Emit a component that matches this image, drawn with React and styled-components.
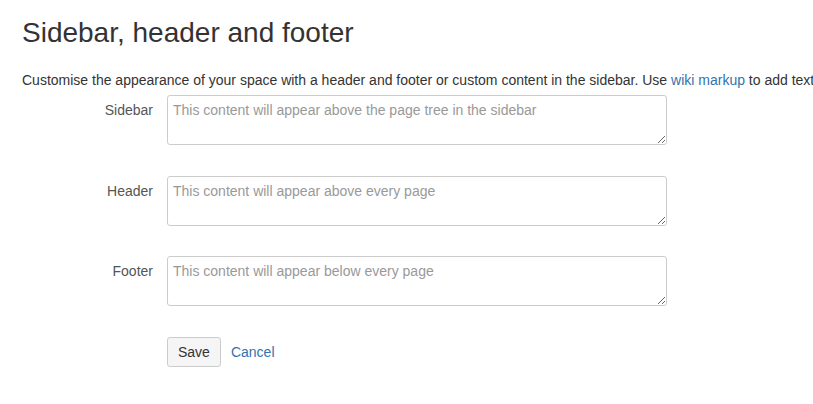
import React from 'react';
import styled, { createGlobalStyle } from 'styled-components';

const GlobalStyle = createGlobalStyle`
  body {
    margin: 0;
    background: #fff;
    font-family: Arial, "Liberation Sans", sans-serif;
    font-size: 14px;
    color: #333;
    overflow: hidden;
  }
`;

const Page = styled.div`
  padding: 18px 0 0 22px;
  font-size: 14px;
`;

const Title = styled.h1`
  font-size: 28px;
  font-weight: normal;
  line-height: 30px;
  margin: 0;
  color: #333;
`;

const Intro = styled.p`
  font-size: 14px;
  line-height: 20px;
  margin: 22px 0 5px 0;
  white-space: nowrap;
`;

const Link = styled.a`
  color: #3572b0;
  text-decoration: none;
  font-size: 14px;
`;

const Form = styled.form`
  display: flex;
  flex-direction: column;
  gap: 30px;
`;

const Row = styled.div`
  display: grid;
  grid-template-columns: 131px 500px;
  column-gap: 14px;
  align-items: start;
  margin-top: ${(p) => (p.$first ? '0' : '1px')};
`;

const Label = styled.label`
  text-align: right;
  font-size: 14px;
  line-height: 20px;
  padding-top: 5px;
  color: #555;
`;

const Field = styled.textarea`
  box-sizing: border-box;
  width: 500px;
  height: 50px;
  margin: 0;
  padding: 4px 5px;
  border: 1px solid #ccc;
  border-radius: 3px;
  font-family: Arial, "Liberation Sans", sans-serif;
  font-size: 14px;
  line-height: 20px;
  color: #333;
  resize: vertical;

  &::placeholder {
    color: #999;
  }
`;

const Actions = styled.div`
  display: flex;
  align-items: center;
  gap: 10px;
  margin-left: 145px;
  margin-top: 1px;
`;

const Button = styled.button`
  box-sizing: border-box;
  height: 30px;
  padding: 0 10px;
  background: #f5f5f5;
  border: 1px solid #ccc;
  border-radius: 3px;
  font-family: Arial, "Liberation Sans", sans-serif;
  font-size: 14px;
  color: #333;
`;

const fields = [
  { id: 'sidebar', label: 'Sidebar', placeholder: 'This content will appear above the page tree in the sidebar' },
  { id: 'header', label: 'Header', placeholder: 'This content will appear above every page' },
  { id: 'footer', label: 'Footer', placeholder: 'This content will appear below every page' },
];

const App = () => {
  return (
    <>
      <GlobalStyle />
      <Page>
        <Title>Sidebar, header and footer</Title>
        <Intro>
          Customise the appearance of your space with a header and footer or custom content in the sidebar. Use{' '}
          <Link href="#">wiki markup</Link> to add text
        </Intro>
        <Form onSubmit={(e) => e.preventDefault()}>
          {fields.map((f, i) => (
            <Row key={f.id} $first={i !== 1}>
              <Label htmlFor={f.id}>{f.label}</Label>
              <Field id={f.id} placeholder={f.placeholder} />
            </Row>
          ))}
          <Actions>
            <Button type="submit">Save</Button>
            <Link href="#">Cancel</Link>
          </Actions>
        </Form>
      </Page>
    </>
  );
};

export default App;
